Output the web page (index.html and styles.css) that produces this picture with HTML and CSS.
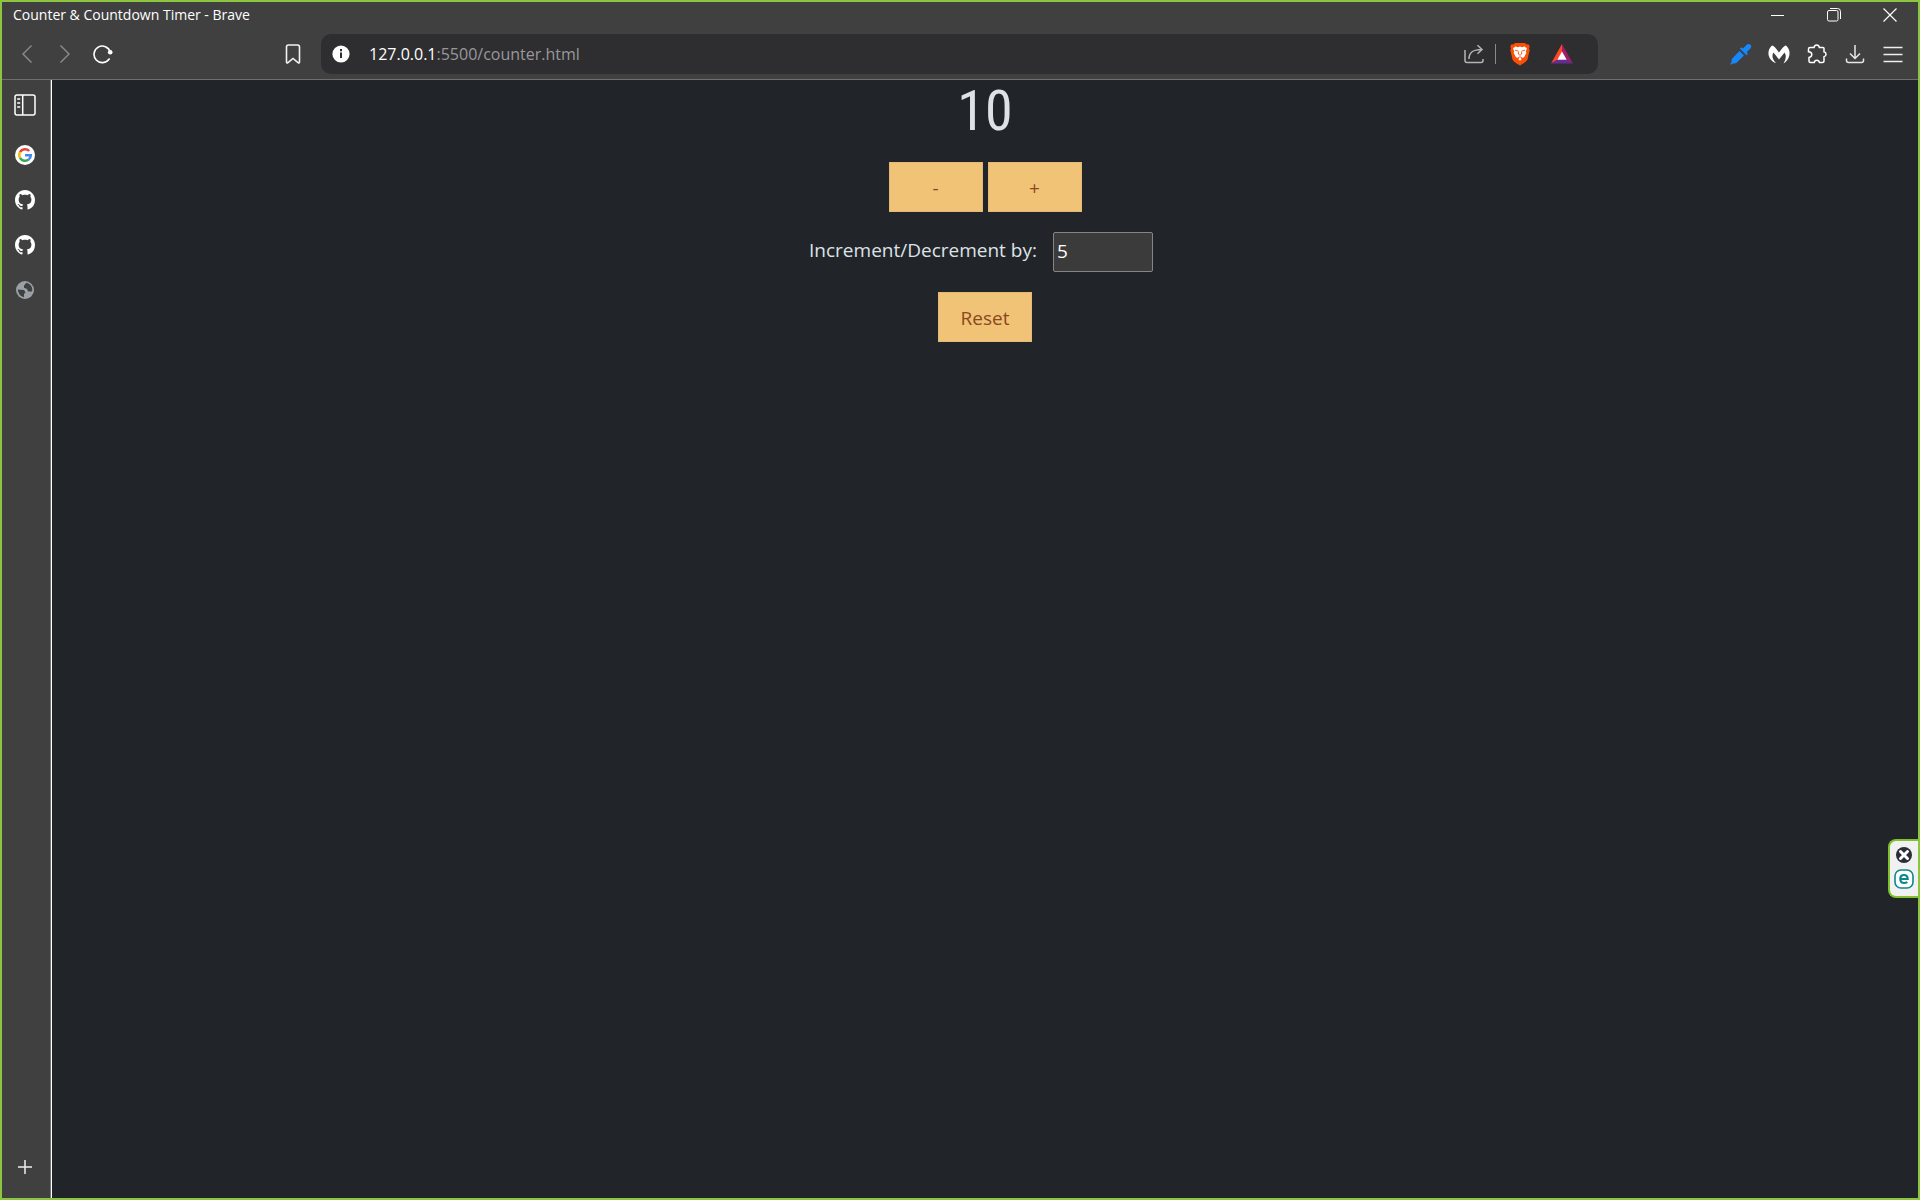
FILE: index.html
```html
<!DOCTYPE html>
<html lang="en">
<head>
<meta charset="utf-8">
<title>Counter &amp; Countdown Timer</title>
<link rel="stylesheet" href="styles.css">
</head>
<body>
<div class="window">
  <header class="chrome">
    <div class="titlebar">
      <span class="title">Counter &amp; Countdown Timer - Brave</span>
      <div class="window-controls">
        <button class="control" aria-label="Minimize"><svg width="14" height="14" viewBox="0 0 14 14"><path d="M0 7.500h13" stroke="#fff" fill="none"/></svg></button>
        <button class="control" aria-label="Restore"><svg width="14" height="14" viewBox="0 0 14 14" fill="none" stroke="#fff"><rect x=".5" y="2.500" width="10.500" height="10.500" rx="1.500"/><path d="M3 .5h7.500a3 3 0 0 1 3 3V11"/></svg></button>
        <button class="control" aria-label="Close"><svg width="14" height="14" viewBox="0 0 14 14"><path d="M.5.5l13 13M13.500.5l-13 13" stroke="#fff" stroke-width="1.200" fill="none"/></svg></button>
      </div>
    </div>
    <div class="toolbar">
      <nav class="navigation">
        <button class="tool" aria-label="Back"><svg width="20" height="20" viewBox="0 0 20 20"><path d="M14.500 1.500L6 10l8.500 8.500" fill="none" stroke="#8c8c8c" stroke-width="1.400"/></svg></button>
        <button class="tool" aria-label="Forward"><svg width="20" height="20" viewBox="0 0 20 20"><path d="M5.500 1.500L14 10l-8.500 8.500" fill="none" stroke="#8c8c8c" stroke-width="1.400"/></svg></button>
        <button class="tool" aria-label="Reload"><svg width="20" height="20" viewBox="0 0 20 20"><path d="M16.200 15A8.300 8.300 0 1 1 17.300 8" fill="none" stroke="#fff" stroke-width="1.600" stroke-linecap="round"/><circle cx="17.200" cy="8.200" r="2.300" fill="#fff"/></svg></button>
        <button class="tool bookmark" aria-label="Bookmark"><svg width="20" height="20" viewBox="0 0 20 20"><path d="M3.500 3Q3.500 1 5.500 1h9Q16.500 1 16.500 3v15q0 1.500-1.500.5L10 14.500 5 18.500q-1.500 1-1.500-.5z" fill="none" stroke="#f2f2f2" stroke-width="1.600"/></svg></button>
      </nav>
      <div class="address">
        <svg class="info" width="18" height="18" viewBox="0 0 18 18"><circle cx="9" cy="9" r="8.600" fill="#fff"/><path d="M9 4v2.200M9 7.600v5.400" stroke="#2e2e31" stroke-width="2"/></svg>
        <a class="url" href="#"><span class="host">127.0.0.1</span>:5500/counter.html</a>
        <button class="share" aria-label="Share"><svg width="20" height="20" viewBox="0 0 20 20" fill="none" stroke="#b4b4b5" stroke-width="1.500"><path d="M1 6v10.500Q1 18.500 3 18.500h14q2 0 2-2V15M5 15C5 8 9 5.500 18 5.500M13.500 1.200L18 5.500l-4.500 4.300"/></svg></button>
        <span class="divider"></span>
        <button class="shield" aria-label="Brave Shields"><svg width="20" height="24" viewBox="0 0 20 24"><path d="M5 1h10l1.500 1.500 2-.3 1.200 2.300-.7 2 .7 1.500-2.200 9.500q-.6 2-7.500 6-6.900-4-7.500-6L.3 8 1 6.500l-.7-2 1.200-2.300 2 .3z" fill="#fb5008"/><path d="M3 6.500L5.300 4.500l2.700.7 2-.7 2 .7 2.700-.7L17 6.500 15.800 9.300l.5 1.800-2.300 4.100-3 1 .5 1.300L10 18.800l-1.500-1.300.5-1.300-3-1-2.300-4.100.5-1.800z" fill="#fff"/><path d="M5 8.200l3.300.8M15 8.200l-3.300.8M8.700 9.500l-.5 2.500 1.800 1.300 1.800-1.300-.5-2.500M8 15.800l2-1 2 1" stroke="#fb5008" stroke-width=".9" fill="none"/></svg></button>
        <button class="rewards" aria-label="Brave Rewards"><svg width="24" height="20" viewBox="0 0 24 20"><path d="M12 0L1 19.500l7-4L12 8.500z" fill="#ff4724"/><path d="M12 0l11 19.500-7-4-4-7z" fill="#9e1f63"/><path d="M1 19.500h22l-7-4.300H8z" fill="#662d91"/><path d="M12 7.500l4.700 8.200H7.300z" fill="#fff"/></svg></button>
      </div>
      <div class="extensions">
        <button class="tool" aria-label="Color picker"><svg width="22" height="22" viewBox="0 0 22 22" fill="#1688fb"><path d="M9.500 8l4.500 4.500L6 20.300l-3 .2L1.200 21.800.3 21l1.200-2 .3-3z"/><path d="M9.800 5.500l1.700-1.300 1.500 1.300L17 1.500Q19 .2 20.700 1.800 22 3.500 20.600 5.300L16.700 9.200l1.300 1.600-1.500 1.500z"/></svg></button>
        <button class="tool" aria-label="Malwarebytes"><svg width="22" height="22" viewBox="0 0 22 22"><path d="M4 2.500Q6 2.300 11 9.500 16 2.300 18 2.500 22.500 6.500 21.300 12.500 20 18 15.500 20.500 19.500 14 16.500 9.500L11 16.500 5.500 9.500Q2.500 14 8 20.200 2 18 .7 12.500-.5 6.500 4 2.500z" fill="#fff"/></svg></button>
        <button class="tool" aria-label="Extensions"><svg width="20" height="20" viewBox="0 0 20 20"><path d="M3 3.500h4Q7.500 1 9.700 1T12.400 3.500h3.600Q17 3.500 17 4.500v3.300q2 .4 2 2.500t-2 2.500V17q0 1.500-1.500 1.500h-3q-.5-2.300-2.700-2.300T7.200 18.500H3.500Q2 18.500 2 17v-3.500q2.800-.6 2.800-3T1.500 7.800V5Q1.500 3.500 3 3.500z" fill="none" stroke="#fff" stroke-width="1.500"/></svg></button>
        <button class="tool" aria-label="Downloads"><svg width="20" height="20" viewBox="0 0 20 20" fill="none" stroke="#e6e6e6" stroke-width="1.500"><path d="M10 1v13M5 9.500l5 5 5-5M1.500 14.500v2q0 2 2 2h13q2 0 2-2v-2"/></svg></button>
        <button class="tool" aria-label="Menu"><svg width="20" height="20" viewBox="0 0 20 20"><path d="M.5 3.500h19M.5 10.500h19M.5 17.500h19" stroke="#eee" stroke-width="1.500"/></svg></button>
      </div>
    </div>
  </header>

  <div class="workspace">
    <aside class="tabs">
      <button class="tab panel" aria-label="Expand tabs"><svg width="22" height="22" viewBox="0 0 22 22" fill="none" stroke="#fff" stroke-width="1.500"><rect x="1" y="1" width="20" height="20" rx="2"/><path d="M8.700 1v20M3.200 5h3M3.200 9h3M3.200 13h3"/></svg></button>
      <button class="tab" aria-label="Google"><svg width="20" height="20" viewBox="0 0 20 20" fill="none" stroke-width="2.500"><circle cx="10" cy="10" r="10" fill="#fff"/><path d="M5 7.200A5.800 5.800 0 0 1 14.200 6" stroke="#ea4335"/><path d="M5 7.200a5.800 5.800 0 0 0 0 5.600" stroke="#fbbc05"/><path d="M5 12.800a5.800 5.800 0 0 0 8.800 1.600" stroke="#34a853"/><path d="M13.800 14.400A5.800 5.800 0 0 0 15.800 10.200H10" stroke="#4285f4"/></svg></button>
      <button class="tab" aria-label="GitHub"><svg width="20" height="20" viewBox="0 0 16 16"><use href="#octocat"/></svg></button>
      <button class="tab" aria-label="GitHub"><svg width="20" height="20" viewBox="0 0 16 16"><use href="#octocat"/></svg></button>
      <button class="tab" aria-label="Counter &amp; Countdown Timer"><svg width="18" height="18" viewBox="0 0 18 18"><circle cx="9" cy="9" r="9" fill="#9aa0a6"/><path d="M10.500 1.800L8 4.500v2.200l3 1.300 1.200 2.400 3.700.1Q16.500 9 16 7M1.800 8.500L8 9l1.500 2.500L8 13v3.200Q2.500 15 1.800 8.500z" fill="#404040"/><path d="M10.500 1.800Q16 3 16.300 9l-3.500.8L12 7 9 6.500V5z" fill="#404040"/></svg></button>
      <button class="tab new-tab" aria-label="New tab"><svg width="14" height="14" viewBox="0 0 14 14"><path d="M7 0v14M0 7h14" stroke="#eee" stroke-width="1.500"/></svg></button>
    </aside>

    <main class="page">
      <output class="count">10</output>
      <div class="step-buttons">
        <button class="action">-</button>
        <button class="action">+</button>
      </div>
      <div class="step">
        <label for="step">Increment/Decrement by:</label>
        <input id="step" class="step-input" type="text" inputmode="numeric" value="5">
      </div>
      <button class="action">Reset</button>
    </main>
  </div>

  <aside class="widget">
    <button class="widget-button" aria-label="Dismiss"><svg width="16" height="16" viewBox="0 0 16 16"><circle cx="8" cy="8" r="8" fill="#2b2e38"/><path d="M4.500 4.500l7 7M11.500 4.500l-7 7" stroke="#fff" stroke-width="3" stroke-linecap="round"/></svg></button>
    <button class="widget-button" aria-label="Open assistant"><svg width="20" height="20" viewBox="0 0 20 20" fill="none" stroke="#0c8790"><rect x="1" y="1" width="18" height="18" rx="6" fill="#fff" stroke-width="1.600"/><path d="M6.500 10h7.200Q13.500 6 10 6q-3.700 0-3.700 4t3.900 4q1.800 0 3.100-1" stroke-width="2.200"/></svg></button>
  </aside>
</div>
<svg class="symbols" aria-hidden="true"><symbol id="octocat" viewBox="0 0 16 16"><path fill="#fff" d="M8 0C3.580 0 0 3.580 0 8c0 3.540 2.290 6.530 5.470 7.590.4.070.55-.17.55-.38 0-.19-.01-.82-.01-1.490-2.010.37-2.530-.49-2.690-.94-.09-.23-.48-.94-.82-1.130-.28-.15-.68-.52-.01-.53.63-.01 1.080.58 1.230.82.72 1.210 1.870.87 2.330.66.07-.52.28-.87.51-1.070-1.780-.2-3.640-.89-3.640-3.950 0-.87.31-1.590.82-2.150-.08-.2-.36-1.020.08-2.120 0 0 .67-.21 2.200.82.64-.18 1.320-.27 2-.27s1.360.09 2 .27c1.530-1.040 2.200-.82 2.200-.82.44 1.100.16 1.920.08 2.120.51.56.82 1.270.82 2.150 0 3.070-1.870 3.750-3.650 3.950.29.25.54.73.54 1.480 0 1.070-.01 1.930-.01 2.200 0 .21.15.46.55.38A8.010 8.010 0 0 0 16 8c0-4.420-3.580-8-8-8z"/></symbol></svg>
</body>
</html>
```
FILE: styles.css
```css
* { box-sizing: border-box; }

body {
  margin: 0;
  font-family: "Segoe UI", "Open Sans", sans-serif;
  background: #212529;
  color: #dee2e6;
}

button {
  padding: 0;
  border: 0;
  background: none;
  font: inherit;
  color: inherit;
}

svg { display: block; }
.symbols { position: absolute; width: 0; height: 0; }

.window {
  position: relative;
  display: flex;
  flex-direction: column;
  min-height: 100vh;
  border: 2px solid #8cc63f;
}

/* Browser chrome */
.chrome {
  background: #404040;
  border-bottom: 1px solid #6f6f6f;
}

.titlebar {
  display: flex;
  align-items: center;
  justify-content: space-between;
  height: 26px;
  padding-left: 11px;
}

.title { font-size: 14px; line-height: 24px; color: #fff; }
.window-controls { display: flex; align-self: stretch; }
.control { display: grid; place-items: center; width: 56px; }

.toolbar {
  display: flex;
  align-items: center;
  height: 51px;
  padding: 0 6px;
}

.navigation, .extensions { display: flex; }
.tool { display: grid; place-items: center; width: 38px; height: 40px; }
.bookmark { margin-left: 152px; }
.extensions { margin-left: 124px; }

.address {
  display: flex;
  flex: 1;
  align-items: center;
  height: 40px;
  margin-left: 9px;
  padding: 0 24px 0 11px;
  border-radius: 10px;
  background: #2e2e31;
}

.url {
  flex: 1;
  margin-left: 19px;
  font-size: 16px;
  line-height: 24px;
  color: #98989a;
  text-decoration: none;
}

.host { color: #fff; }
.divider { width: 1px; height: 20px; margin: 0 14px 0 11px; background: #8a8a8b; }
.rewards { margin-left: 20px; }

/* Vertical tabs */
.workspace { display: flex; flex: 1; }

.tabs {
  display: flex;
  flex-direction: column;
  width: 50px;
  padding: 2px 3px 9px 0;
  border-right: 1px solid #fff;
  background: #404040;
  box-shadow: inset -1px 0 #777;
}

.tab { display: grid; place-items: center; height: 45px; }
.panel { margin-bottom: 5px; }
.new-tab { margin-top: auto; }

/* Counter page */
.page {
  display: flex;
  flex: 1;
  flex-direction: column;
  align-items: center;
  gap: 20px;
}

.count {
  font-family: "Liberation Sans Narrow", "Roboto Condensed", "Open Sans Condensed", "Noto Sans Condensed", Roboto, sans-serif;
  font-size: 56px;
  line-height: 62px;
}

.step-buttons { display: flex; gap: 5px; }

.action {
  width: 94px;
  height: 50px;
  padding-top: 2px;
  border: 1px solid #e5b877;
  background: #f0c377;
  color: #8b4820;
  font-size: 19px;
}

.step {
  display: flex;
  gap: 16px;
  margin-right: 8px;
  font-size: 19px;
  line-height: 36px;
}

.step-input {
  width: 100px;
  height: 40px;
  padding: 0 3px 2px;
  border: 1px solid #858585;
  border-radius: 2px;
  background: #3b3b3b;
  color: #fff;
  font: inherit;
}

/* Floating helper pinned to the window edge */
.widget {
  position: fixed;
  bottom: 302px;
  right: 2px;
  display: flex;
  flex-direction: column;
  align-items: center;
  gap: 6px;
  width: 30px;
  height: 59px;
  padding: 6px 0;
  border: 2px solid #7fc12f;
  border-right: 0;
  border-radius: 8px 0 0 8px;
  background: #f1f1f2;
}
```
